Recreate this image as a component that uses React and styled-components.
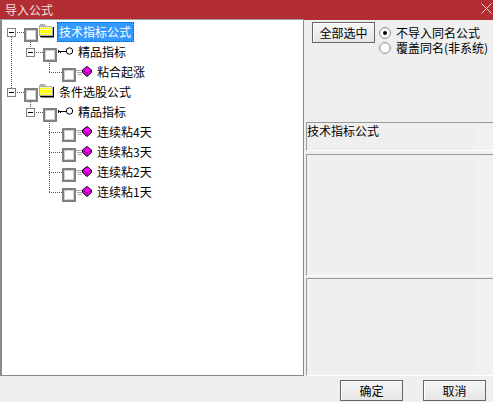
import React from "react";
import styled, { createGlobalStyle } from "styled-components";

const GlobalStyle = createGlobalStyle`
  html, body {
    margin: 0;
    padding: 0;
    background: #efefef;
  }
  body {
    font-family: "Noto Sans CJK SC", "Liberation Sans", sans-serif;
    font-size: 12px;
    color: #000;
  }
`;

const Window = styled.div`
  width: 493px;
  height: 402px;
  display: flex;
  flex-direction: column;
  overflow: hidden;
  background: #efefef;
`;

const TitleBar = styled.div`
  height: 20px;
  flex: none;
  display: flex;
  align-items: center;
  justify-content: space-between;
  padding: 0 1px 0 5px;
  background: #b22e33;
  color: #f3dfe0;
  font-size: 12px;
  line-height: 18px;
`;

const CloseIcon = styled.svg`
  width: 11px;
  height: 11px;
  margin-bottom: 4px;
`;

const Body = styled.div`
  height: 356px;
  flex: none;
  display: flex;
`;

const Tree = styled.div`
  position: relative;
  width: 304px;
  flex: none;
  box-sizing: border-box;
  padding-top: 2px;
  background: #fff;
  border-left: 2px solid #8a8a8a;
  border-right: 1px solid #8a8a8a;
  border-top: 1px solid #a0a0a0;
  border-bottom: 1px solid #8a8a8a;
  margin-top: -1px;
`;

const Row = styled.div`
  height: 20px;
  display: flex;
  align-items: center;
  padding-left: ${(p) => p.$indent}px;
`;

const Guide = styled.i`
  position: absolute;
  left: ${(p) => p.$x - 2}px;
  top: ${(p) => p.$y - 20}px;
  width: ${(p) => p.$w || 0}px;
  height: ${(p) => p.$h || 0}px;
  border-left: ${(p) => (p.$h ? "1px dotted #555" : "none")};
  border-top: ${(p) => (p.$w ? "1px dotted #555" : "none")};
`;

const Expander = styled.span`
  box-sizing: border-box;
  width: 9px;
  height: 9px;
  flex: none;
  margin-right: 8px;
  border: 1px solid #808080;
  background: #fff;
  display: flex;
  align-items: center;
  justify-content: center;
  &::after {
    content: "";
    width: 5px;
    height: 1px;
    background: #000;
  }
`;

const Check = styled.span`
  box-sizing: border-box;
  width: 14px;
  height: 14px;
  flex: none;
  margin-top: 6px;
  border: 2px solid #808080;
  box-shadow: inset 0 0 0 1px #d0d0d0;
  background: #fff;
  position: relative;
  z-index: 1;
`;

const Label = styled.span`
  margin-left: ${(p) => p.$gap}px;
  height: 20px;
  line-height: 19px;
  white-space: nowrap;
  font-size: 12px;
`;

const SelectedLabel = styled.span`
  box-sizing: border-box;
  width: 77px;
  height: 20px;
  margin-left: 3px;
  padding-left: 2px;
  white-space: nowrap;
  font-size: 12px;
  line-height: 19px;
  background: #3399ff;
  color: #fff;
  outline: 1px dotted #7a4a10;
  outline-offset: -1px;
`;

const FolderIcon = styled.svg`
  width: 16px;
  height: 14px;
  flex: none;
  margin: -3px 0 0 0;
`;

const KeyIcon = styled.svg`
  width: 16px;
  height: 8px;
  flex: none;
  margin: -3px 0 0 1px;
`;

const LeafIcon = styled.svg`
  width: 16px;
  height: 11px;
  flex: none;
  margin: -1px 0 0 0;
`;

const Side = styled.div`
  flex: 1;
  min-width: 0;
  display: flex;
  flex-direction: column;
  padding-left: 2px;
`;

const Options = styled.div`
  box-sizing: border-box;
  height: 102px;
  flex: none;
  display: flex;
  align-items: flex-start;
  padding: 2px 0 0 6px;
`;

const Button = styled.button`
  box-sizing: border-box;
  width: ${(p) => p.$w}px;
  height: 21px;
  flex: none;
  padding: 0;
  border: 1px solid #666;
  background: linear-gradient(#f6f6f6, #e6e6e6);
  box-shadow: inset 1px 1px 0 #fff;
  font-family: inherit;
  font-size: 12px;
  line-height: 18px;
  color: #000;
`;

const RadioGroup = styled.div`
  display: flex;
  flex-direction: column;
  margin-left: 4px;
  padding-top: 3px;
`;

const RadioRow = styled.div`
  height: 15px;
  display: flex;
  align-items: center;
  white-space: nowrap;
  font-size: 12px;
  line-height: 15px;
`;

const Radio = styled.span`
  box-sizing: border-box;
  width: 12px;
  height: 12px;
  margin-right: 5px;
  flex: none;
  border-radius: 50%;
  border: 1px solid #999;
  box-shadow: inset 0 0 0 1px #e2e2e2;
  background: #fff;
  display: flex;
  align-items: center;
  justify-content: center;
  &::after {
    content: "";
    display: ${(p) => (p.$on ? "block" : "none")};
    width: 4px;
    height: 4px;
    border-radius: 50%;
    background: #000;
  }
`;

const Panel = styled.div`
  box-sizing: border-box;
  height: ${(p) => p.$h}px;
  margin-bottom: ${(p) => p.$mb}px;
  flex: none;
  border-top: 1px solid #999;
  border-left: 1px solid #999;
  border-bottom: 1px solid #fff;
  background: linear-gradient(90deg, #efefef 0 170px, #f2f1f0 170px);
  font-size: 12px;
  line-height: 15px;
`;

const Footer = styled.div`
  flex: 1;
  display: flex;
  justify-content: flex-end;
  gap: 20px;
  padding: 4px 7px 0 0;
`;

const names = ["连续粘4天", "连续粘3天", "连续粘2天", "连续粘1天"];

const Folder = () => (
  <FolderIcon viewBox="0 0 16 14" shapeRendering="crispEdges">
    <path d="M1 3 V1 H2 V0 H7 V1 H8 V2 H14 V3 H15 V12 H1 Z" fill="#b0b0b0" />
    <rect x="2" y="3" width="12" height="8" fill="#ffff00" />
    <path d="M2 3.5 H14 M2 5.5 H14 M3 7.5 H14 M2 9.5 H14" stroke="#ffffb0" strokeWidth="1" strokeDasharray="1 1" />
    <path d="M15 3 H16 V13 H2 V12 H15 Z" fill="#000" />
    <rect x="3" y="13" width="13" height="1" fill="#808080" />
  </FolderIcon>
);

const Key = () => (
  <KeyIcon viewBox="0 0 16 8">
    <path d="M0.5 3 V6 M2.5 4 V6 M0.5 4.5 H8" stroke="#000" strokeWidth="1" fill="none" />
    <circle cx="11.5" cy="4" r="3.2" fill="#fff" stroke="#000" strokeWidth="1" />
  </KeyIcon>
);

const Leaf = () => (
  <LeafIcon viewBox="0 0 16 11">
    <path d="M0 4.5 H6 M1 6.5 H6 M2 8.5 H6" stroke="#aaa" strokeWidth="1" />
    <path d="M11 0.5 L15.5 4 V6.5 L11 10.5 L6.5 6.5 V4 Z" fill="#ff00ff" stroke="#000" strokeWidth="1" />
    <path d="M7 4.5 L11 7 L15 4.5 M11 7 V10" fill="none" stroke="#700070" strokeWidth="1" />
  </LeafIcon>
);

const Cross = () => (
  <CloseIcon viewBox="0 0 11 11">
    <path d="M0.5 0.5 L10.5 10.5 M10.5 0.5 L0.5 10.5" stroke="#f0d5d6" strokeWidth="1" />
  </CloseIcon>
);

const RootRow = ({ text, selected }) => (
  <Row $indent={5}>
    <Expander />
    <Check />
    <Folder />
    {selected ? (
      <SelectedLabel>{text}</SelectedLabel>
    ) : (
      <Label $gap={5}>{text}</Label>
    )}
  </Row>
);

const GroupRow = () => (
  <Row $indent={24}>
    <Expander />
    <Check />
    <Key />
    <Label $gap={4}>精品指标</Label>
  </Row>
);

const LeafRow = ({ text }) => (
  <Row $indent={60}>
    <Check />
    <Leaf />
    <Label $gap={5}>{text}</Label>
  </Row>
);

const App = () => {
  return (
    <Window>
      <GlobalStyle />
      <TitleBar>
        导入公式
        <Cross />
      </TitleBar>
      <Body>
        <Tree>
          {/* dotted tree lines */}
          <Guide $x={11} $y={37} $h={51} />
          <Guide $x={17} $y={32} $w={7} />
          <Guide $x={17} $y={92} $w={7} />
          <Guide $x={30} $y={41} $h={6} />
          <Guide $x={36} $y={52} $w={7} />
          <Guide $x={49} $y={60} $h={12} />
          <Guide $x={49} $y={72} $w={13} />
          <Guide $x={30} $y={101} $h={6} />
          <Guide $x={36} $y={112} $w={7} />
          <Guide $x={49} $y={120} $h={72} />
          <Guide $x={49} $y={132} $w={13} />
          <Guide $x={49} $y={152} $w={13} />
          <Guide $x={49} $y={172} $w={13} />
          <Guide $x={49} $y={192} $w={13} />

          <RootRow text="技术指标公式" selected />
          <GroupRow />
          <LeafRow text="粘合起涨" />
          <RootRow text="条件选股公式" />
          <GroupRow />
          {names.map((n) => (
            <LeafRow key={n} text={n} />
          ))}
        </Tree>
        <Side>
          <Options>
            <Button $w={63}>全部选中</Button>
            <RadioGroup>
              <RadioRow>
                <Radio $on />
                不导入同名公式
              </RadioRow>
              <RadioRow>
                <Radio />
                覆盖同名(非系统)
              </RadioRow>
            </RadioGroup>
          </Options>
          <Panel $h={29} $mb={3}>技术指标公式</Panel>
          <Panel $h={122} $mb={2} />
          <Panel $h={98} $mb={0} />
        </Side>
      </Body>
      <Footer>
        <Button $w={63}>确定</Button>
        <Button $w={63}>取消</Button>
      </Footer>
    </Window>
  );
};

export default App;
